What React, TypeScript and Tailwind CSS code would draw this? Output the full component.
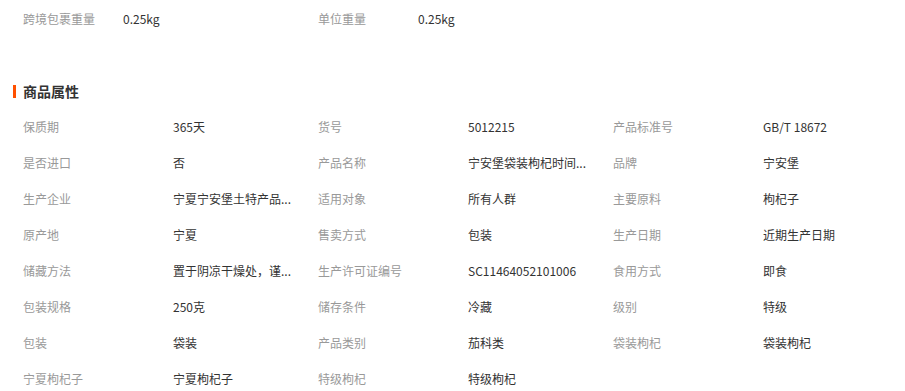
const weights = [
  { label: '跨境包裹重量', value: '0.25kg' },
  { label: '单位重量', value: '0.25kg' },
];

// 长文本已在数据里截断，与页面一致
const attrs: [string, string][] = [
  ['保质期', '365天'],
  ['货号', '5012215'],
  ['产品标准号', 'GB/T 18672'],
  ['是否进口', '否'],
  ['产品名称', '宁安堡袋装枸杞时间...'],
  ['品牌', '宁安堡'],
  ['生产企业', '宁夏宁安堡土特产品...'],
  ['适用对象', '所有人群'],
  ['主要原料', '枸杞子'],
  ['原产地', '宁夏'],
  ['售卖方式', '包装'],
  ['生产日期', '近期生产日期'],
  ['储藏方法', '置于阴凉干燥处，谨...'],
  ['生产许可证编号', 'SC11464052101006'],
  ['食用方式', '即食'],
  ['包装规格', '250克'],
  ['储存条件', '冷藏'],
  ['级别', '特级'],
  ['包装', '袋装'],
  ['产品类别', '茄科类'],
  ['袋装枸杞', '袋装枸杞'],
  ['宁夏枸杞子', '宁夏枸杞子'],
  ['特级枸杞', '特级枸杞'],
];

export default function App() {
  return (
    <div
      className="w-[905px] h-[391px] overflow-hidden bg-white text-[12px] text-[#333]"
      style={{ fontFamily: '"Microsoft YaHei", "Noto Sans CJK SC", sans-serif' }}
    >
      {/* 重量 */}
      <div className="flex h-[38px] items-center pl-[23px]">
        {weights.map((w) => (
          <div key={w.label} className="flex w-[295px] items-center">
            <span className="w-[100px] text-[#999]">{w.label}</span>
            <span>{w.value}</span>
          </div>
        ))}
      </div>

      {/* 标题 */}
      <div className="mt-[44px] flex h-[19px] items-center">
        <span className="ml-[13px] h-[13px] w-[3px] bg-[#ff5000]" />
        <span className="ml-[7px] text-[14px] font-bold text-[#333]">商品属性</span>
      </div>

      {/* 属性 */}
      <div className="mt-[8px] grid grid-cols-[repeat(3,295px)] pl-[23px]">
        {attrs.map(([label, value], i) => (
          <div key={i} className="flex h-[36px] items-center">
            <span className="w-[150px] shrink-0 text-[#999]">{label}</span>
            <span className="whitespace-nowrap">{value}</span>
          </div>
        ))}
      </div>
    </div>
  );
}
